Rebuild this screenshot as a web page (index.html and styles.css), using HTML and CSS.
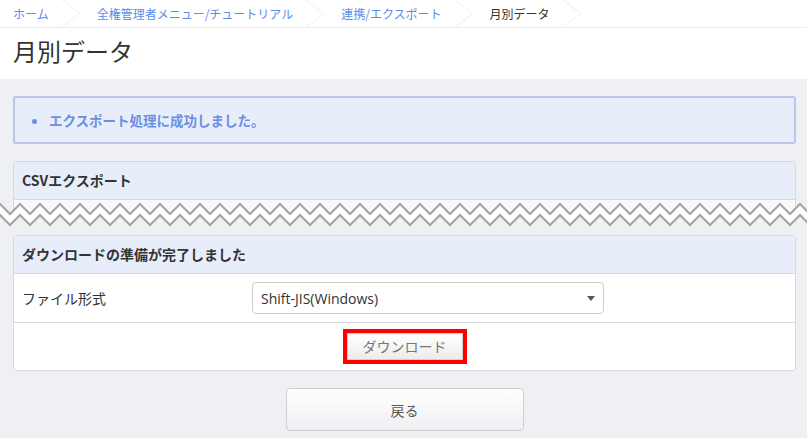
FILE: index.html
```html
<!DOCTYPE html>
<html lang="ja">
<head>
  <meta charset="UTF-8" />
  <meta name="viewport" content="width=device-width, initial-scale=1.0"/>
  <title>月別データ</title>
  <link rel="stylesheet" href="styles.css">
</head>
<body>
  <header class="page-head">
    <nav class="crumbs">
      <a class="crumb" href="#">ホーム</a>
      <svg class="crumb-sep" viewBox="0 0 18 27"><polyline points="0,0 18,13.5 0,27" /></svg>
      <a class="crumb" href="#">全権管理者メニュー/チュートリアル</a>
      <svg class="crumb-sep" viewBox="0 0 18 27"><polyline points="0,0 18,13.5 0,27" /></svg>
      <a class="crumb" href="#">連携/エクスポート</a>
      <svg class="crumb-sep" viewBox="0 0 18 27"><polyline points="0,0 18,13.5 0,27" /></svg>
      <span class="crumb crumb-current">月別データ</span>
      <svg class="crumb-sep" viewBox="0 0 18 27"><polyline points="0,0 18,13.5 0,27" /></svg>
    </nav>
    <h1 class="page-title">月別データ</h1>
  </header>

  <main class="content">
    <!-- メッセージ -->
    <div class="alert">
      <ul>
        <li>エクスポート処理に成功しました。</li>
      </ul>
    </div>

    <!-- CSVエクスポート (省略部分) -->
    <div class="torn">
      <section class="panel">
        <h2 class="panel-head">CSVエクスポート</h2>
        <div class="panel-body cut"></div>
      </section>
      <svg class="zigzag" width="807" height="35">
        <defs>
          <pattern id="zz" width="20" height="35" patternUnits="userSpaceOnUse">
            <polygon points="0,4 10,14 20,4 20,15 10,25 0,15" fill="#ffffff" />
            <polygon points="0,15 10,25 20,15 20,35 0,35" fill="#eff0f4" />
            <polyline points="-10,14 0,4 10,14 20,4 30,14" fill="none" stroke="#a4a4a4" stroke-width="2" />
            <polyline points="-10,25 0,15 10,25 20,15 30,25" fill="none" stroke="#a4a4a4" stroke-width="2" />
          </pattern>
        </defs>
        <rect x="0" y="0" width="807" height="35" fill="url(#zz)" />
      </svg>
    </div>

    <!-- ダウンロード -->
    <section class="panel ready">
      <h2 class="panel-head">ダウンロードの準備が完了しました</h2>
      <div class="form-row">
        <label class="form-label">ファイル形式</label>
        <div class="select">
          <span class="select-text">Shift-JIS(Windows)</span>
          <svg class="caret" viewBox="0 0 8 5"><polygon points="0,0 8,0 4,5" /></svg>
        </div>
      </div>
      <div class="form-row center">
        <div class="mark">
          <button class="btn btn-download" type="button">ダウンロード</button>
        </div>
      </div>
    </section>

    <div class="back-row">
      <button class="btn btn-back" type="button">戻る</button>
    </div>
  </main>
</body>
</html>
```

FILE: styles.css
```css
* {
  margin: 0;
  padding: 0;
  box-sizing: border-box;
}

body {
  font-family: "Noto Sans CJK JP", "Noto Sans", sans-serif;
  font-size: 14px;
  color: #333;
  background-color: #eff0f4;
}

/* ヘッダー */
.page-head {
  background: #fff;
}

.crumbs {
  display: flex;
  height: 28px;
  padding-left: 13px;
  border-bottom: 1px solid #ececec;
  font-size: 12px;
}

.crumb {
  display: flex;
  align-items: center;
  margin-right: 13px;
  color: #5b8de8;
  text-decoration: none;
}

.crumb-current {
  color: #333;
}

.crumb-sep {
  width: 18px;
  height: 27px;
  margin-right: 17px;
}

.crumb-sep polyline {
  fill: none;
  stroke: #efefef;
  stroke-width: 1;
}

.page-title {
  font-size: 24px;
  font-weight: normal;
  line-height: 36px;
  padding: 5px 13px 10px;
  color: #333;
}

/* メイン */
.content {
  padding: 17px 11px 0 13px;
}

.alert {
  height: 48px;
  border: 2px solid #b9c5e9;
  border-radius: 3px;
  background: #e8eef9;
  color: #6b8fe2;
  font-size: 13.5px;
  font-weight: bold;
}

.alert ul {
  padding-left: 34px;
  line-height: 44px;
}

.panel {
  background: #fff;
  border: 1px solid #d6dae0;
  border-radius: 3px;
}

.panel-head {
  height: 38px;
  line-height: 37px;
  padding: 0 8px;
  font-size: 14px;
  font-weight: bold;
  background: #e8eef9;
  border-bottom: 1px solid #d6dae0;
}

.torn {
  position: relative;
  margin-top: 17px;
}

.cut {
  height: 31px;
  background: #f9f9f9;
}

.zigzag {
  position: absolute;
  left: -13px;
  top: 39px;
  display: block;
}

.ready {
  margin-top: 3px;
}

.form-row {
  display: flex;
  align-items: center;
  padding: 8px 0;
  border-bottom: 1px solid #d6dae0;
}

.form-row:last-child {
  border-bottom: none;
}

.form-row.center {
  justify-content: center;
  padding: 6px 0;
}

.form-label {
  width: 238px;
  padding-left: 8px;
}

.select {
  display: flex;
  align-items: center;
  justify-content: space-between;
  width: 352px;
  height: 32px;
  padding: 0 8px;
  border: 1px solid #ccc;
  border-radius: 4px;
  background: #fff;
}

.select-text {
  font-family: "Open Sans", "Noto Sans CJK JP", sans-serif;
}

.caret {
  width: 8px;
  height: 5px;
  fill: #555;
}

.mark {
  border: 4px solid #ff0000;
  line-height: 0;
}

.btn {
  font-family: inherit;
  font-size: 14px;
  border: 1px solid #cfcfcf;
  background: linear-gradient(#ffffff, #ececec);
  cursor: pointer;
}

.btn-download {
  width: 116px;
  height: 27px;
  line-height: 25px;
  color: #777;
}

.back-row {
  display: flex;
  justify-content: center;
  margin-top: 17px;
}

.btn-back {
  width: 238px;
  height: 43px;
  border-radius: 4px;
  color: #555;
  background: linear-gradient(#ffffff, #eeeff2);
}
```
